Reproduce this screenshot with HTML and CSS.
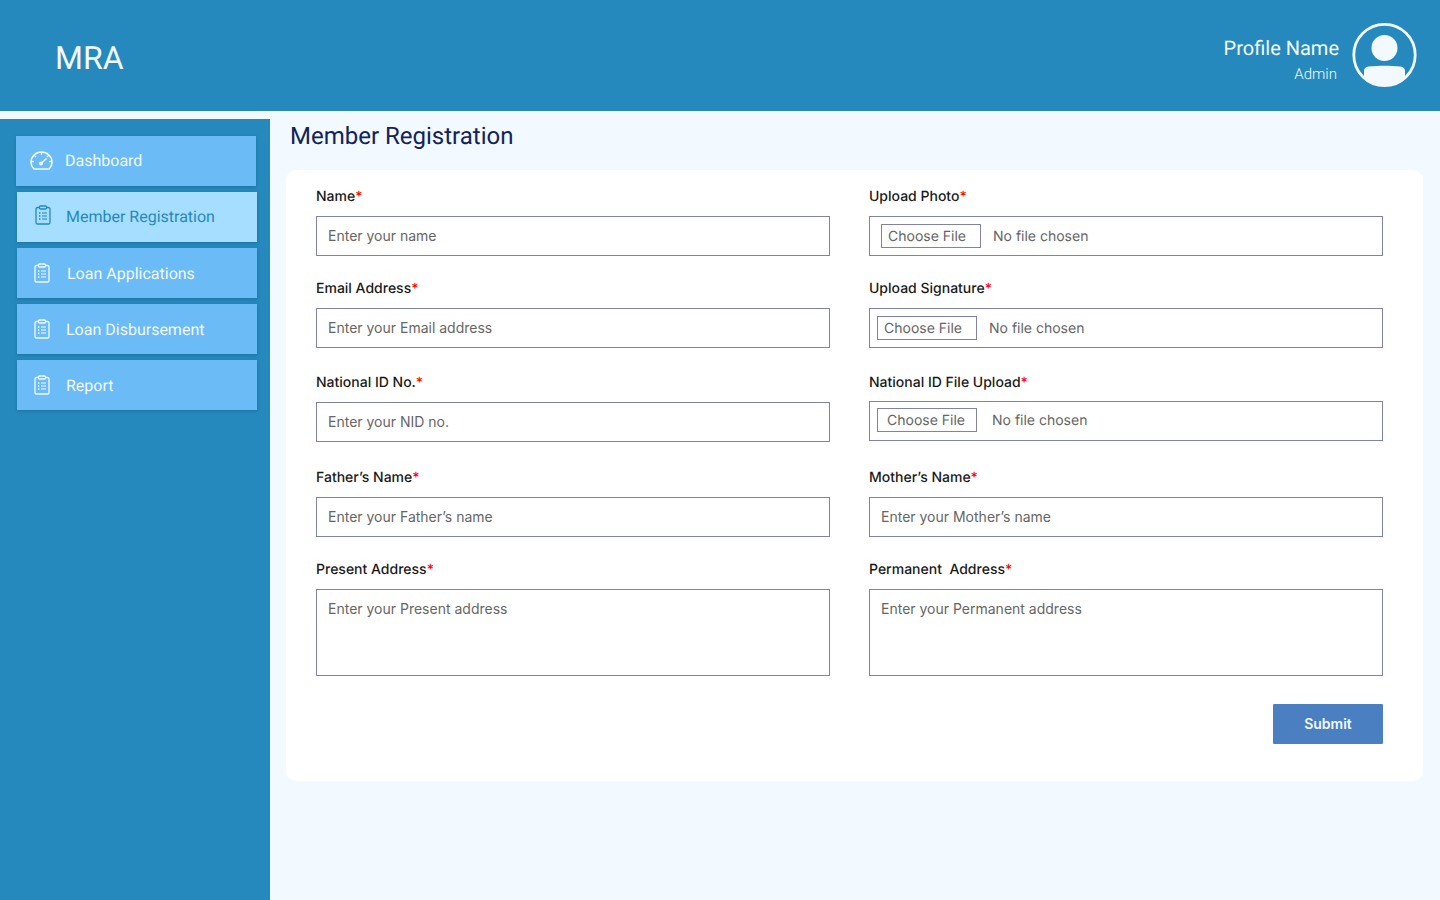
FILE: index.html
```html
<!DOCTYPE html>
<html lang="en">
<head>
<meta charset="utf-8">
<title>MRA - Member Registration</title>
<link rel="stylesheet" href="styles.css">
</head>
<body>
<svg class="defs" width="0" height="0" aria-hidden="true">
  <symbol id="clip" viewBox="0 0 16 20">
    <path d="M4.5 2.5H2.6C1.7 2.5 1 3.2 1 4.1v13.3c0 .9.7 1.6 1.6 1.6h10.8c.9 0 1.6-.7 1.6-1.6V4.1c0-.9-.7-1.6-1.6-1.6h-1.900" fill="none" stroke="currentColor" stroke-width="1.300"/>
    <rect x="4.500" y="1" width="7" height="3" rx="1" fill="none" stroke="currentColor" stroke-width="1.300"/>
    <path d="M7 8h5M7 11h5M7 14h5" stroke="currentColor" stroke-width="1.200" fill="none"/>
    <path d="M4 8h1.400M4 11h1.400M4 14h1.400" stroke="currentColor" stroke-width="1.400" fill="none"/>
  </symbol>
</svg>
<header class="topbar">
  <div class="brand">MRA</div>
  <div class="profile">
    <div class="profile-text">
      <div class="profile-name">Profile Name</div>
      <div class="profile-role">Admin</div>
    </div>
    <svg class="avatar" width="66" height="66" viewBox="0.5 0 66 66">
      <defs><clipPath id="av"><circle cx="33" cy="33" r="30"/></clipPath></defs>
      <circle cx="33" cy="33" r="30.700" fill="none" stroke="#f2f9ff" stroke-width="2.800"/>
      <circle cx="33" cy="26" r="13" fill="#f2f9ff"/>
      <path clip-path="url(#av)" d="M12.500 49c0-2.500 1.500-4.300 4.500-4.500 5-.5 11-.7 16-.7s11 .2 16 .7c3 .2 4.500 2 4.500 4.500v17h-41z" fill="#f2f9ff"/>
    </svg>
  </div>
</header>
<div class="shell">
  <nav class="sidebar">
    <a class="nav-item nav-first">
      <svg class="nav-gauge" width="23" height="19" viewBox="0 0 23 19">
        <path d="M4 18C2.200 16.200 1 13.800 1 11.200 1 5.600 5.700 1 11.500 1S22 5.600 22 11.200c0 2.600-1.200 5-3 6.800z" fill="none" stroke="currentColor" stroke-width="1.600"/>
        <path d="M11.500 1v2.800M1.200 10.500H4M21.800 10.500H19M4.200 4.200l1.900 1.900M18.800 4.200l-1.900 1.900" stroke="currentColor" stroke-width="1.300"/>
        <path d="M11 12.500l5.500-5" stroke="currentColor" stroke-width="1.500"/>
        <circle cx="11" cy="12.500" r="2" fill="currentColor"/>
      </svg>
      <span>Dashboard</span>
    </a>
    <a class="nav-item nav-active">
      <svg class="nav-icon" width="16" height="20"><use href="#clip"/></svg>
      <span>Member Registration</span>
    </a>
    <a class="nav-item nav-wide">
      <svg class="nav-icon" width="16" height="20"><use href="#clip"/></svg>
      <span>Loan Applications</span>
    </a>
    <a class="nav-item">
      <svg class="nav-icon" width="16" height="20"><use href="#clip"/></svg>
      <span>Loan Disbursement</span>
    </a>
    <a class="nav-item">
      <svg class="nav-icon" width="16" height="20"><use href="#clip"/></svg>
      <span>Report</span>
    </a>
  </nav>
  <main class="content">
    <h1 class="title">Member Registration</h1>
    <form class="card">
      <div class="row">
        <div class="field">
          <label class="label">Name<b>*</b></label>
          <input class="input" type="text" placeholder="Enter your name">
        </div>
        <div class="field">
          <label class="label">Upload Photo<b>*</b></label>
          <div class="file file-a"><span class="file-btn">Choose File</span><span class="file-none">No file chosen</span></div>
        </div>
      </div>
      <div class="row row-email">
        <div class="field">
          <label class="label">Email Address<b>*</b></label>
          <input class="input" type="text" placeholder="Enter your Email address">
        </div>
        <div class="field">
          <label class="label">Upload Signature<b>*</b></label>
          <div class="file"><span class="file-btn">Choose File</span><span class="file-none">No file chosen</span></div>
        </div>
      </div>
      <div class="row row-nid">
        <div class="field">
          <label class="label">National ID No.<b>*</b></label>
          <input class="input" type="text" placeholder="Enter your NID no.">
        </div>
        <div class="field field-up">
          <label class="label">National ID File Upload<b>*</b></label>
          <div class="file file-c"><span class="file-btn">Choose File</span><span class="file-none">No file chosen</span></div>
        </div>
      </div>
      <div class="row">
        <div class="field">
          <label class="label">Father’s Name<b>*</b></label>
          <input class="input" type="text" placeholder="Enter your Father’s name">
        </div>
        <div class="field">
          <label class="label">Mother’s Name<b>*</b></label>
          <input class="input" type="text" placeholder="Enter your Mother’s name">
        </div>
      </div>
      <div class="row">
        <div class="field">
          <label class="label">Present Address<b>*</b></label>
          <textarea class="input area" placeholder="Enter your Present address"></textarea>
        </div>
        <div class="field">
          <label class="label">Permanent&nbsp; Address<b>*</b></label>
          <textarea class="input area" placeholder="Enter your Permanent address"></textarea>
        </div>
      </div>
      <div class="actions"><button class="submit" type="button">Submit</button></div>
    </form>
  </main>
</div>
</body>
</html>
```
FILE: styles.css
```css
* { box-sizing: border-box; }
html, body { margin: 0; height: 100%; }
body {
  height: 900px;
  overflow: hidden;
  display: flex;
  flex-direction: column;
  background: #f2f9ff;
  font-family: Inter, "Liberation Sans", sans-serif;
  color: #1a1a1a;
  text-rendering: geometricPrecision;
}
.defs { position: absolute; }
.topbar {
  height: 111px;
  flex: none;
  background: #2589bd;
  display: flex;
  align-items: center;
  justify-content: space-between;
  padding: 0 22px 4px 55px;
  font-family: Roboto, sans-serif;
  color: #f2f9ff;
}
.brand { font-size: 32px; line-height: 40px; margin-top: 8px; font-weight: 400; }
.profile { display: flex; align-items: center; gap: 13px; margin-top: 3px; }
.profile-text { text-align: right; padding-top: 8px; }
.profile-name { font-size: 20px; line-height: 24px; }
.profile-role { font-size: 15px; line-height: 16px; margin-top: 6px; margin-right: 2px; font-weight: 300; }
.avatar { display: block; }

.shell { flex: 1; display: flex; min-height: 0; }
.sidebar {
  width: 270px;
  flex: none;
  margin-top: 8px;
  background: #2589bd;
  padding: 17px 0 0 17px;
  font-family: Roboto, sans-serif;
}
.nav-item {
  width: 240px;
  height: 50px;
  margin-bottom: 6px;
  display: flex;
  align-items: center;
  gap: 16px;
  padding-left: 17px;
  background: #6abbf6;
  color: #f2f9ff;
  font-size: 16px;
  box-shadow: 0 1px 3px rgba(0, 40, 80, .25);
}
.nav-first { margin-left: -1px; padding-left: 14px; gap: 12px; padding-bottom: 1px; }
.nav-active { background: #a6deff; color: #2589bd; padding-left: 18px; gap: 15px; padding-bottom: 1px; }
.nav-active .nav-icon { margin-bottom: 3px; }
.nav-wide { gap: 17px; }
.nav-icon, .nav-gauge { flex: none; display: block; }

.content { flex: 1; padding: 0 17px 0 16px; min-width: 0; }
.title {
  margin: 9px 0 18px 4px;
  font-family: Roboto, sans-serif;
  font-size: 24px;
  line-height: 32px;
  font-weight: 400;
  color: #13235b;
}
.card {
  height: 611px;
  background: #fff;
  border-radius: 10px;
  padding: 16px 40px 0 30px;
}
.row { display: grid; grid-template-columns: 514px 514px; column-gap: 39px; margin-bottom: 22px; }
.row-email { margin-bottom: 24px; }
.row-nid { margin-bottom: 25px; }
.label { display: block; height: 20px; margin-bottom: 10px; font-size: 14px; line-height: 22px; font-weight: 500; color: #1a1a1a; }
.label b { color: #f00; font-weight: 500; }
.field-up .label { margin-bottom: 9px; }
.input {
  display: block;
  width: 100%;
  height: 40px;
  padding: 0 11px 2px;
  border: 1px solid #8083a8;
  border-radius: 0;
  background: #fff;
  font-family: Inter, sans-serif;
  font-size: 14px;
  color: #666;
  outline: none;
}
.input::placeholder { color: #666; opacity: 1; }
.area { height: 87px; padding: 9px 11px; resize: none; line-height: 20px; }
.file {
  height: 40px;
  display: flex;
  align-items: center;
  border: 1px solid #8083a8;
  padding-left: 7px;
  font-size: 14px;
  color: #666;
}
.file-btn {
  width: 100px;
  height: 24px;
  line-height: 24px;
  padding-left: 6px;
  border: 1px solid #8083a8;
  margin-right: 12px;
}
.file-a { padding-left: 11px; }
.file-c .file-btn { padding-left: 9px; margin-right: 15px; margin-bottom: 2px; }
.file-c .file-none { margin-bottom: 2px; }
.actions { display: flex; justify-content: flex-end; margin-top: 28px; }
.submit {
  width: 110px;
  height: 40px;
  border: 0;
  border-radius: 1px;
  padding: 0 0 2px;
  background: #4a7fc1;
  color: #f2f9ff;
  font-family: Inter, sans-serif;
  font-size: 14px;
  font-weight: 600;
}
```
